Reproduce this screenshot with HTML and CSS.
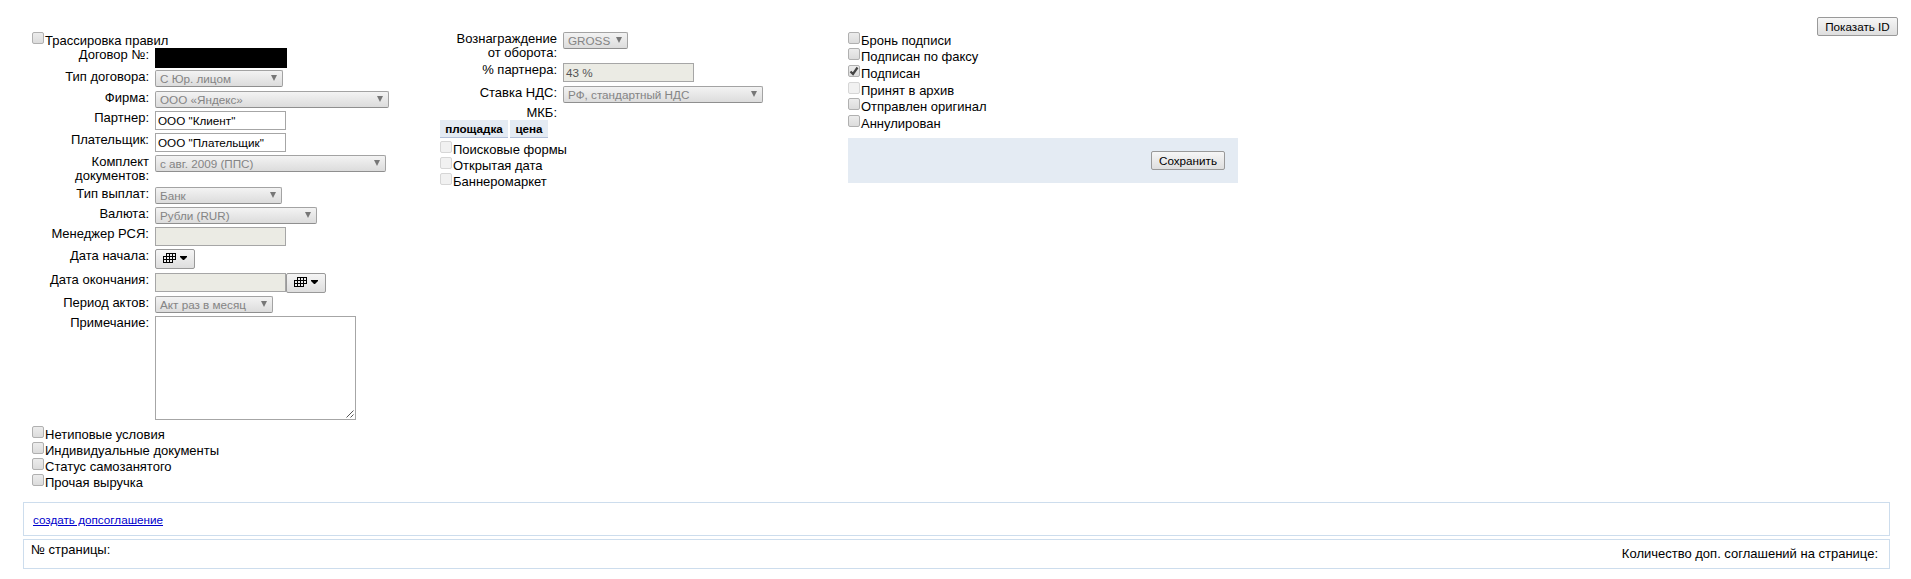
FILE: index.html
```
<!DOCTYPE html>
<html lang="ru">
<head>
<meta charset="utf-8">
<title>Договор</title>
<link rel="stylesheet" href="styles.css">
</head>
<body>
<svg width="0" height="0" class="defs">
  <symbol id="cal" viewBox="0 0 26 12">
    <path d="M3 0h10v7h-3v3H0V3h3z" fill="#000"/>
    <path d="M4 1h2v2H4zM7 1h2v2H7zM10 1h2v2h-2zM4 4h2v2H4zM7 4h2v2H7zM10 4h2v2h-2zM1 4h2v2H1zM1 7h2v2H1zM4 7h2v2H4zM7 7h2v2H7z" fill="#eee"/>
    <path d="M17 3h7v1l-3 3h-1l-3-3z" fill="#000"/>
  </symbol>
</svg>
<main class="page">
  <section class="form">
    <div class="col col-a">
      <div class="check"><i class="box"></i>Трассировка правил</div>
      <div class="row r22"><span class="label">Договор №:</span><span class="redacted"></span></div>
      <div class="row r21"><span class="label">Тип договора:</span><span class="select w128">С Юр. лицом</span></div>
      <div class="row r20"><span class="label">Фирма:</span><span class="select w234">ООО «Яндекс»</span></div>
      <div class="row r22"><span class="label">Партнер:</span><span class="input">ООО "Клиент"</span></div>
      <div class="row r22"><span class="label">Плательщик:</span><span class="input">ООО "Плательщик"</span></div>
      <div class="row r32"><span class="label">Комплект документов:</span><span class="select w231">с авг. 2009 (ППС)</span></div>
      <div class="row r20"><span class="label">Тип выплат:</span><span class="select w127">Банк</span></div>
      <div class="row r20"><span class="label">Валюта:</span><span class="select w162">Рубли (RUR)</span></div>
      <div class="row r22"><span class="label">Менеджер РСЯ:</span><span class="input off"></span></div>
      <div class="row r24"><span class="label">Дата начала:</span><span class="cal"><svg width="26" height="12"><use href="#cal"/></svg></span></div>
      <div class="row r23"><span class="label">Дата окончания:</span><span class="input off"></span><span class="cal"><svg width="26" height="12"><use href="#cal"/></svg></span></div>
      <div class="row r20"><span class="label">Период актов:</span><span class="select w118">Акт раз в месяц</span></div>
      <div class="row r110"><span class="label">Примечание:</span><span class="area"><svg width="8" height="8"><path d="M.5 7.5l7-7M4.500 7.500l3-3" stroke="#555" fill="none"/></svg></span></div>
      <div class="check"><i class="box"></i>Нетиповые условия</div>
      <div class="check"><i class="box"></i>Индивидуальные документы</div>
      <div class="check"><i class="box"></i>Статус самозанятого</div>
      <div class="check"><i class="box"></i>Прочая выручка</div>
    </div>
    <div class="col col-b">
      <div class="row r31"><span class="label">Вознаграждение от оборота:</span><span class="select w65">GROSS</span></div>
      <div class="row r23"><span class="label">% партнера:</span><span class="input off">43 %</span></div>
      <div class="row r20"><span class="label">Ставка НДС:</span><span class="select w200">РФ, стандартный НДС</span></div>
      <div class="row r14"><span class="label">МКБ:</span></div>
      <div class="heads"><b class="head w68">площадка</b><b class="head w38">цена</b></div>
      <div class="check"><i class="box dim"></i>Поисковые формы</div>
      <div class="check"><i class="box dim"></i>Открытая дата</div>
      <div class="check"><i class="box dim"></i>Баннеромаркет</div>
    </div>
    <div class="col col-c">
      <div class="check"><i class="box"></i>Бронь подписи</div>
      <div class="check tall"><i class="box"></i>Подписан по факсу</div>
      <div class="check tall"><i class="box"><svg width="10" height="10" viewBox="0 0 10 10"><path d="M1.500 5.500L4 8 8.500 1.500" fill="none" stroke="#444" stroke-width="2.200"/></svg></i>Подписан</div>
      <div class="check"><i class="box dim"></i>Принят в архив</div>
      <div class="check tall"><i class="box"></i>Отправлен оригинал</div>
      <div class="check"><i class="box"></i>Аннулирован</div>
      <div class="panel"><button class="btn save">Сохранить</button></div>
    </div>
    <button class="btn show-id">Показать ID</button>
  </section>
  <section class="bar create"><a class="link" href="#">создать допсоглашение</a></section>
  <section class="bar pager"><span>№ страницы:</span><span class="count">Количество доп. соглашений на странице:</span></section>
</main>
</body>
</html>
```
FILE: styles.css
```
* { box-sizing: border-box; }
body { margin: 0; background: #fff; color: #000; font: 13px/14px "Liberation Sans", Arial, sans-serif; }
.defs { display: block; position: absolute; }
.page { padding: 17px 13px 0 23px; }
.form { display: flex; height: 485px; align-items: flex-start; }
.col { padding-top: 15px; flex: none; }
.col-a { width: 408px; padding-left: 9px; margin-right: 9px; }
.col-b { width: 408px; }
.col-c { width: 390px; }

.row { display: flex; align-items: flex-start; }
.r14 { height: 14px; } .r20 { height: 20px; } .r21 { height: 21px; } .r22 { height: 22px; }
.r23 { height: 23px; } .r24 { height: 24px; } .r31 { height: 31px; } .r32 { height: 32px; } .r110 { height: 110px; }
.label { width: 117px; margin-right: 6px; text-align: right; flex: none; }

.select { position: relative; height: 17px; padding: 1px 0 0 4px; border: 1px solid #a3a3a3; border-radius: 2px; border-bottom-color: #8f8f8f; background: linear-gradient(#f3f3f3, #dcdcdc); color: #848484; font-size: 11.700px; line-height: 14px; white-space: nowrap; }
.select::after { content: ""; position: absolute; right: 5px; top: 4px; border: 3px solid transparent; border-top: 6px solid #777; border-bottom: 0; }
.w128 { width: 128px; } .w234 { width: 234px; } .w231 { width: 231px; } .w127 { width: 127px; }
.w162 { width: 162px; } .w118 { width: 118px; } .w65 { width: 65px; } .w200 { width: 200px; }
.input { width: 131px; height: 19px; border: 1px solid #a6a6a6; padding: 2px 0 0 2px; font-size: 11.700px; line-height: 14px; background: #fff; white-space: nowrap; }
.off { background: #ebebe4; color: #545454; }
.redacted { width: 132px; height: 20px; background: #000; }
.cal { width: 40px; height: 20px; border: 1px solid #999; border-radius: 2px; background: linear-gradient(#f5f5f5, #dedede); padding: 3px 0 0 7px; }
.cal svg { display: block; }
.area { width: 201px; height: 104px; border: 1px solid #a6a6a6; display: flex; align-items: flex-end; justify-content: flex-end; padding: 1px; }

.check { display: flex; height: 16px; white-space: nowrap; line-height: 18px; }
.tall { height: 17px; }
.box { width: 12px; height: 12px; margin-right: 1px; border: 1px solid #b0b0b0; border-radius: 2px; background: linear-gradient(#ececec, #dcdcdc); flex: none; }
.box svg { display: block; }
.dim { border-color: #d6d6d6; background: #f1f1f1; }

.heads { display: flex; gap: 2px; height: 21px; }
.head { height: 18px; background: #e4ebf3; border-bottom: 1px solid #b3c0d8; font-size: 11.700px; line-height: 18px; text-align: center; }
.w68 { width: 68px; } .w38 { width: 38px; }
.panel { height: 45px; margin-top: 7px; padding: 13px 13px 0 0; background: #e4ebf3; display: flex; justify-content: flex-end; }
.btn { height: 19px; padding: 1px 0 0; border: 1px solid #999; border-radius: 2px; background: linear-gradient(#f6f6f6, #dedede); font: 11.700px/16px "Liberation Sans", Arial, sans-serif; color: #000; }
.save { width: 74px; }
.show-id { width: 81px; margin-left: auto; }

.bar { border: 1px solid #cddded; width: 1867px; display: flex; justify-content: space-between; }
.create { height: 34px; padding: 10px 0 0 9px; }
.link { font-size: 11.700px; color: #0000cc; }
.pager { height: 30px; margin-top: 3px; padding: 3px 11px 0 7px; }
.count { padding-top: 4px; }
```
